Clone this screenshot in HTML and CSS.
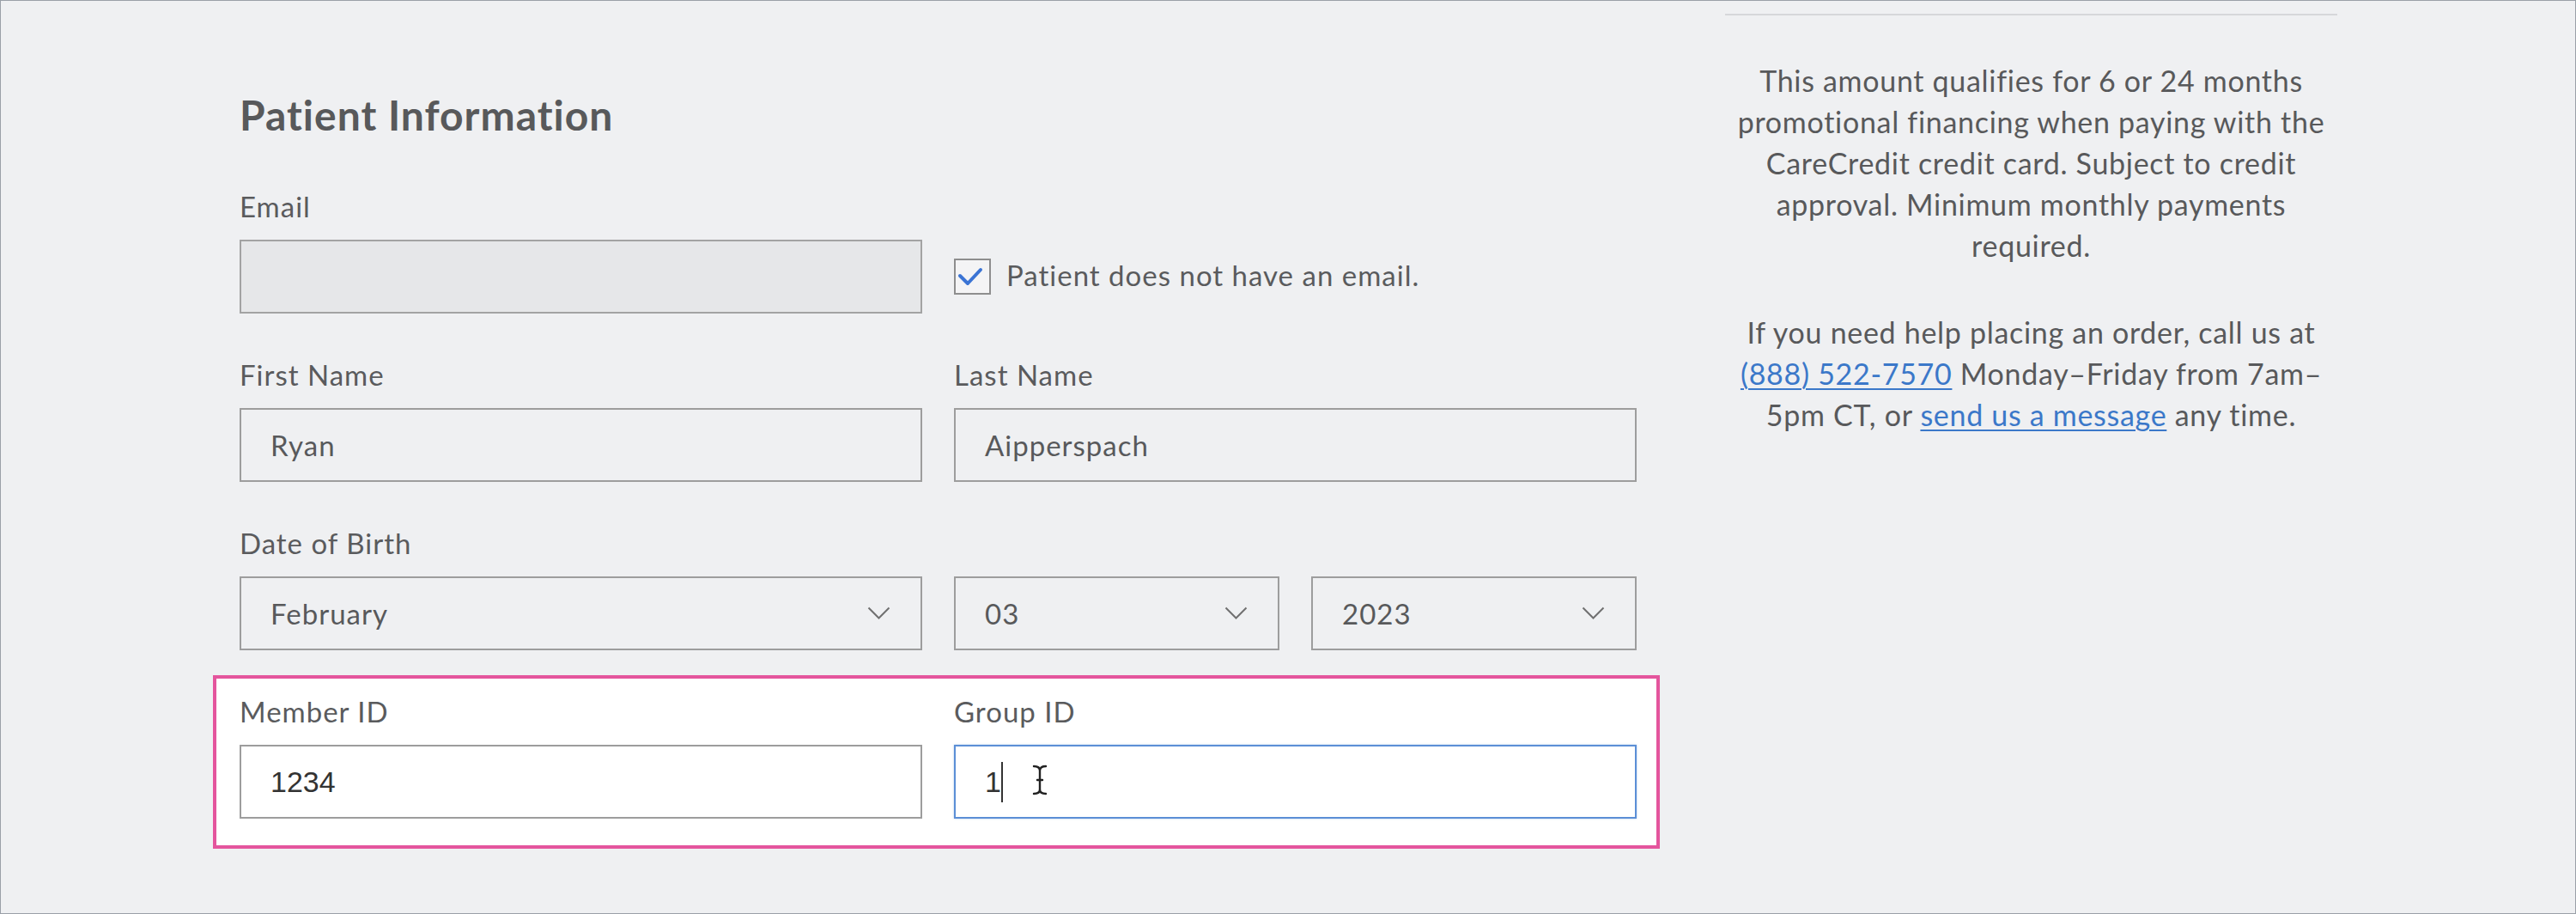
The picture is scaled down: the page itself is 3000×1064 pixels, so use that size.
FILE: index.html
```html
<!DOCTYPE html>
<html lang="en">
<head>
<meta charset="utf-8">
<title>Patient Information</title>
<link rel="stylesheet" href="styles.css">
</head>
<body>
<div class="frame">
  <main class="form">
    <h2 class="title">Patient Information</h2>

    <div class="row row-first">
      <div class="cell">
        <div class="label">Email</div>
        <div class="field field-disabled"></div>
      </div>
      <div class="cell">
        <div class="label"></div>
        <div class="check-wrap">
          <span class="checkbox">
            <svg width="39" height="38" viewBox="0 0 39 38"><polyline points="5,18 14,27 29,11" fill="none" stroke="#3b74d4" stroke-width="4" stroke-linecap="round" stroke-linejoin="round"/></svg>
          </span>
          <span class="check-text">Patient does not have an email.</span>
        </div>
      </div>
    </div>

    <div class="row">
      <div class="cell">
        <div class="label">First Name</div>
        <div class="field">Ryan</div>
      </div>
      <div class="cell">
        <div class="label">Last Name</div>
        <div class="field">Aipperspach</div>
      </div>
    </div>

    <div class="row">
      <div class="cell">
        <div class="label">Date of Birth</div>
        <div class="field select"><span>February</span><svg class="chev" width="27" height="16" viewBox="0 0 27 16"><polyline points="1.5,1.5 13.5,13.5 25.5,1.5" fill="none" stroke="#707070" stroke-width="2"/></svg></div>
      </div>
      <div class="cell">
        <div class="label"></div>
        <div class="pair">
          <div class="field select"><span>03</span><svg class="chev" width="27" height="16" viewBox="0 0 27 16"><polyline points="1.5,1.5 13.5,13.5 25.5,1.5" fill="none" stroke="#707070" stroke-width="2"/></svg></div>
          <div class="field select"><span>2023</span><svg class="chev" width="27" height="16" viewBox="0 0 27 16"><polyline points="1.5,1.5 13.5,13.5 25.5,1.5" fill="none" stroke="#707070" stroke-width="2"/></svg></div>
        </div>
      </div>
    </div>

    <div class="row highlight">
      <div class="cell">
        <div class="label">Member ID</div>
        <div class="field field-white typed">1234</div>
      </div>
      <div class="cell">
        <div class="label">Group ID</div>
        <div class="field field-white field-focus typed">1<span class="caret"></span>
          <svg class="ibeam" width="18" height="36" viewBox="0 0 18 36"><path d="M2 2 Q9 2 9 7 Q9 2 16 2 M9 7 L9 29 M2 34 Q9 34 9 29 Q9 34 16 34 M6 18 L12 18" fill="none" stroke="#222" stroke-width="2.4" stroke-linecap="round"/></svg>
        </div>
      </div>
    </div>
  </main>

  <aside class="aside">
    <div class="rule"></div>
    <p class="note">This amount qualifies for 6 or 24 months promotional financing when paying with the CareCredit credit card. Subject to credit approval. Minimum monthly payments required.</p>
    <p class="note note-2">If you need help placing an order, call us at <a href="#">(888) 522-7570</a><span> Monday–Friday from 7am–</span><span>5pm CT, or </span><a href="#">send us a message</a><span> any time.</span></p>
  </aside>
</div>
</body>
</html>
```

FILE: styles.css
```css
html, body {
  margin: 0;
  padding: 0;
  background: #eff0f2;
}

.frame {
  width: 3000px;
  height: 1064px;
  box-sizing: border-box;
  border: 1px solid #9aa0a8;
  background: #eff0f2;
  display: flex;
  align-items: flex-start;
  font-family: "Lato", "Open Sans", sans-serif;
  color: #58595b;
}

.form {
  width: 1627px;
  margin-left: 278px;
  padding-top: 109px;
}

.title {
  margin: 0;
  font-size: 48px;
  line-height: 48px;
  font-weight: 700;
  letter-spacing: 1px;
  color: #58595b;
}

.row {
  display: grid;
  grid-template-columns: 1fr 1fr;
  column-gap: 37px;
  margin-top: 51px;
}

.row-first {
  margin-top: 62px;
}

.label {
  height: 40px;
  font-size: 33px;
  line-height: 40px;
  letter-spacing: 1px;
  margin-bottom: 19px;
  color: #5a5b5d;
}

.field {
  position: relative;
  height: 86px;
  box-sizing: border-box;
  border: 2px solid #9d9d9d;
  display: flex;
  align-items: center;
  padding-left: 34px;
  padding-right: 35px;
  font-size: 33px;
  letter-spacing: 1px;
  color: #58595b;
}

.field-disabled {
  background: #e6e7e9;
  border-color: #a3a3a3;
}

.check-wrap {
  height: 86px;
  display: flex;
  align-items: center;
  gap: 18px;
}

.checkbox {
  width: 43px;
  height: 42px;
  box-sizing: border-box;
  border: 2px solid #8e8e8e;
  background: #f4f4f5;
  display: flex;
  align-items: center;
  justify-content: center;
}

.check-text {
  font-size: 33px;
  letter-spacing: 1px;
  color: #5a5b5d;
  position: relative;
  top: -2px;
}

.select {
  justify-content: space-between;
}

.chev {
  display: block;
}

.pair {
  display: grid;
  grid-template-columns: 1fr 1fr;
  column-gap: 37px;
}

.highlight {
  margin: 29px -27px 0 -31px;
  padding: 18px 23px 31px 27px;
  border: 4px solid #e4559d;
  background: #ffffff;
}

.field-white {
  background: #ffffff;
}

.typed {
  font-family: "Liberation Sans", Arial, sans-serif;
  font-size: 34px;
  letter-spacing: 0;
  color: #333333;
}

.field-focus {
  border-color: #5c8fd6;
  box-shadow: 0 0 2px rgba(92, 143, 214, 0.5);
}

.caret {
  display: inline-block;
  width: 2px;
  height: 47px;
  background: #333333;
}

.ibeam {
  position: absolute;
  left: 89px;
  top: 21px;
}

.aside {
  width: 713px;
  margin-left: 103px;
  padding-top: 15px;
}

.rule {
  height: 2px;
  background: #d6d7da;
}

.note {
  margin: 52px 0 0 0;
  font-size: 34px;
  line-height: 48px;
  letter-spacing: 0.7px;
  text-align: center;
  color: #58595b;
}

.note-2 {
  margin-top: 53px;
}

.note a {
  color: #3b78c9;
  text-decoration: underline;
  text-decoration-thickness: 2px;
  text-underline-offset: 4px;
}
```
